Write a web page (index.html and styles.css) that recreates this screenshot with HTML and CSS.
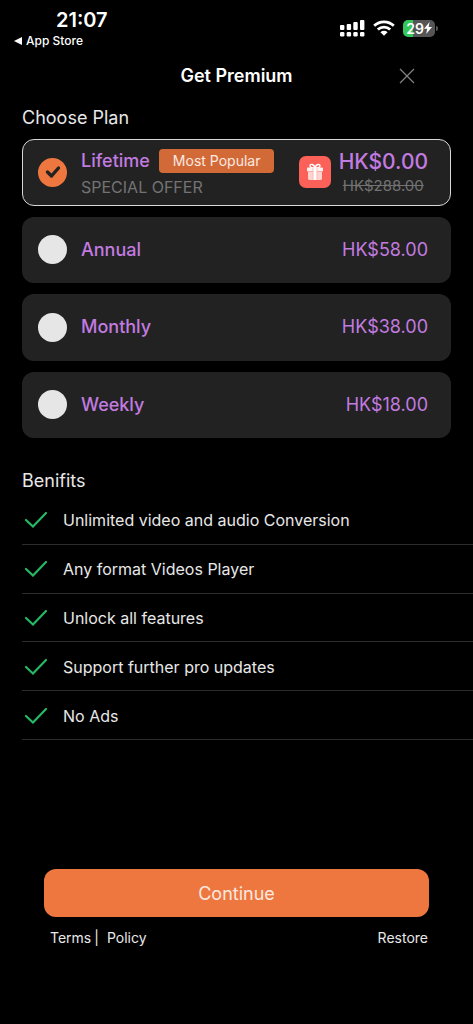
FILE: index.html
```html
<!DOCTYPE html>
<html lang="en">
<head>
<meta charset="utf-8">
<meta name="viewport" content="width=device-width, initial-scale=1">
<title>Get Premium</title>
<link rel="stylesheet" href="styles.css">
</head>
<body>
<div class="screen">
  <div class="status">
    <div class="status-left">
      <div class="clock">21:07</div>
      <a class="back" href="#">
        <svg width="8" height="8" viewBox="0 0 8 8" aria-hidden="true"><path d="M8 0v8L0 4z" fill="#fff"/></svg>
        App Store
      </a>
    </div>
    <div class="status-right">
      <svg width="25" height="17" viewBox="0 0 25 17" fill="#fff" aria-label="Signal">
        <rect x="0" y="5" width="4.400" height="5" rx="1"/><rect x="6.700" y="4" width="4.400" height="6" rx="1"/><rect x="13.300" y="2" width="4.400" height="8" rx="1"/><rect x="20" y="0" width="4.400" height="10" rx="1"/>
        <rect x="0" y="12" width="4.400" height="4.400" rx="1.200"/><rect x="6.700" y="12" width="4.400" height="4.400" rx="1.200"/><rect x="13.300" y="12" width="4.400" height="4.400" rx="1.200"/><rect x="20" y="12" width="4.400" height="4.400" rx="1.200"/>
      </svg>
      <svg width="22" height="16" viewBox="0 0 22 16" aria-label="Wi-Fi">
        <g fill="none" stroke="#fff" stroke-width="2.8"><path d="M1.200 5.800a14 14 0 0 1 19.600 0"/><path d="M4.800 9.600a9 9 0 0 1 12.400 0"/></g>
        <path d="M7.400 12.200a5.200 5.200 0 0 1 7.200 0L11 15.800z" fill="#fff"/>
      </svg>
      <div class="battery">
        <span>29</span>
        <svg width="8" height="12" viewBox="0 0 8 12" aria-hidden="true"><path d="M5.600 0L0 6.800h3.200L2.200 12 8 5H4.600z" fill="#fff"/></svg>
      </div>
    </div>
  </div>

  <header class="title-bar">
    <h1>Get Premium</h1>
    <button class="close" type="button" aria-label="Close">
      <svg width="16" height="16" viewBox="0 0 16 16"><path d="M1 1l14 14M15 1L1 15" stroke="#858585" stroke-width="1.2" fill="none"/></svg>
    </button>
  </header>

  <main>
    <h2 class="plans-title">Choose Plan</h2>
    <form class="plans">
      <label class="plan plan-selected">
        <input class="radio" type="radio" name="plan" checked>
        <svg class="tick" width="16" height="14" viewBox="0 0 16 14" aria-hidden="true"><path d="M2.500 7l4 4 7-8" fill="none" stroke="#222" stroke-width="3.4" stroke-linecap="round" stroke-linejoin="round"/></svg>
        <span class="info">
          <span class="name-row"><span class="name">Lifetime</span><span class="tag">Most Popular</span></span>
          <span class="offer">SPECIAL OFFER</span>
        </span>
        <span class="gift">
          <svg width="18" height="18" viewBox="0 0 18 18" aria-hidden="true">
            <path d="M9 5C7 5 4 4.800 4 2.800S8 .5 9 5c1-4.500 5-4.200 5-2.200S11 5 9 5z" fill="none" stroke="#fff" stroke-width="1.4"/>
            <rect x="1" y="4.500" width="16" height="4" rx="1" fill="#fff3f2"/>
            <path d="M2 9h14v6.500a1.500 1.500 0 0 1-1.500 1.500h-11A1.500 1.500 0 0 1 2 15.500z" fill="#ffd3cf"/>
            <path d="M7.300 4.500h3.400V17H7.300z" fill="#fff"/>
            <path d="M7 4.500V17M11 4.500V17" stroke="#ffaaa4" stroke-width=".6"/>
          </svg>
        </span>
        <span class="prices"><span class="price price-big">HK$0.00</span><s class="old">HK$288.00</s></span>
      </label>
      <label class="plan"><input class="radio" type="radio" name="plan"><span class="info name">Annual</span><span class="price">HK$58.00</span></label>
      <label class="plan"><input class="radio" type="radio" name="plan"><span class="info name">Monthly</span><span class="price">HK$38.00</span></label>
      <label class="plan"><input class="radio" type="radio" name="plan"><span class="info name">Weekly</span><span class="price">HK$18.00</span></label>
    </form>

    <h2 class="benefits-title">Benifits</h2>
    <ul class="benefits">
      <li><svg class="check" width="22" height="16" viewBox="0 0 22 16" aria-hidden="true"><path d="M1 8l7 6.500L21 1"/></svg>Unlimited video and audio Conversion</li>
      <li><svg class="check" width="22" height="16" viewBox="0 0 22 16" aria-hidden="true"><path d="M1 8l7 6.500L21 1"/></svg>Any format Videos Player</li>
      <li><svg class="check" width="22" height="16" viewBox="0 0 22 16" aria-hidden="true"><path d="M1 8l7 6.500L21 1"/></svg>Unlock all features</li>
      <li><svg class="check" width="22" height="16" viewBox="0 0 22 16" aria-hidden="true"><path d="M1 8l7 6.500L21 1"/></svg>Support further pro updates</li>
      <li><svg class="check" width="22" height="16" viewBox="0 0 22 16" aria-hidden="true"><path d="M1 8l7 6.500L21 1"/></svg>No Ads</li>
    </ul>
  </main>

  <footer class="footer">
    <button class="continue" type="button">Continue</button>
    <nav class="links">
      <span class="legal"><a href="#">Terms</a><span class="bar">|</span><a href="#">Policy</a></span>
      <a href="#">Restore</a>
    </nav>
  </footer>
</div>
</body>
</html>
```
FILE: styles.css
```css
* { box-sizing: border-box; }

body {
  margin: 0;
  background: #000;
  color: #e8e8e8;
  font-family: Inter, "Liberation Sans", sans-serif;
}

a { color: inherit; text-decoration: none; }
button { border: 0; padding: 0; font-family: inherit; cursor: pointer; }

.screen {
  min-height: 100vh;
  display: flex;
  flex-direction: column;
}

.status {
  display: flex;
  justify-content: space-between;
  padding: 8px 38px 0 14px;
  color: #fff;
}
.clock {
  padding-left: 42px;
  font-size: 20px;
  line-height: 24px;
  font-weight: 600;
}
.back {
  display: flex;
  align-items: center;
  gap: 4px;
  font-size: 12px;
  line-height: 18px;
  font-weight: 500;
}
.status-right {
  display: flex;
  align-items: center;
  gap: 8px;
  height: 40px;
}
.battery {
  position: relative;
  display: flex;
  align-items: center;
  justify-content: center;
  width: 32px;
  height: 17px;
  border-radius: 5px;
  background: linear-gradient(90deg, #34c759 30%, #555 30%);
  font-size: 14px;
  font-weight: 600;
}
.battery::after {
  content: "";
  position: absolute;
  right: -3px;
  top: 6px;
  width: 2px;
  height: 5px;
  border-radius: 0 2px 2px 0;
  background: #555;
}

.title-bar {
  display: grid;
  grid-template-columns: 1fr auto 1fr;
  align-items: center;
  height: 52px;
}
h1 {
  grid-column: 2;
  margin: 0;
  color: #fff;
  font-size: 18px;
  line-height: 24px;
  font-weight: 600;
}
.close {
  justify-self: end;
  display: flex;
  margin-right: 58px;
  background: none;
}

h2 {
  margin: 0 22px;
  font-size: 18px;
  line-height: 24px;
  font-weight: 400;
}
.plans-title { margin-top: 4px; margin-bottom: 9px; }

.plans {
  display: grid;
  grid-auto-rows: 1fr;
  gap: 11px;
  min-height: 299px;
  margin: 0 22px;
}
.plan {
  position: relative;
  display: flex;
  align-items: center;
  padding: 0 23px 0 16px;
  border-radius: 12px;
  background: #222;
}
.plan-selected {
  padding: 0 22px 0 15px;
  border: 1px solid #d8d8d8;
}
.radio {
  appearance: none;
  flex: none;
  width: 29px;
  height: 29px;
  margin: 0 14px 0 0;
  border-radius: 50%;
  background: #e6e6e6;
}
.radio:checked { background: #ee773f; }
.tick {
  position: absolute;
  left: 22px;
  top: 50%;
  transform: translateY(-50%);
}
.info { flex: 1; }
.plan-selected .info,
.prices { padding-top: 4px; }
.name {
  color: #c27be0;
  font-size: 18px;
  line-height: 24px;
  font-weight: 500;
}
.name-row { display: flex; align-items: center; gap: 9px; }
.tag {
  padding: 0 14px;
  border-radius: 4px;
  background: #d26a38;
  color: #fbe9e0;
  font-size: 14px;
  line-height: 24px;
}
.offer {
  display: block;
  margin-top: 2px;
  color: #737373;
  font-size: 16px;
  line-height: 24px;
}
.gift {
  display: grid;
  place-items: center;
  width: 32px;
  height: 32px;
  margin-right: 8px;
  border-radius: 7px;
  background: #fb6059;
}
.price {
  color: #c27be0;
  font-size: 18px;
  line-height: 24px;
}
.prices {
  display: flex;
  flex-direction: column;
  align-items: center;
}
.price-big { font-size: 21px; font-weight: 500; }
.old {
  color: #737373;
  font-size: 15px;
  line-height: 24px;
}

.benefits-title { margin-top: 31px; margin-bottom: 3px; }
.benefits {
  display: grid;
  grid-auto-rows: 1fr;
  min-height: 244px;
  margin: 0 0 0 22px;
  padding: 0;
  list-style: none;
}
.benefits li {
  display: flex;
  align-items: center;
  gap: 16px;
  padding: 1px 0 0 3px;
  border-bottom: 1px solid #2b2b2b;
  font-size: 16px;
  line-height: 20px;
}
.check {
  fill: none;
  stroke: #25b865;
  stroke-width: 2.2;
  stroke-linecap: round;
}

.footer {
  margin-top: auto;
  padding: 24px 44px 76px;
}
.continue {
  display: block;
  width: 100%;
  height: 48px;
  border-radius: 12px;
  background: #ee773f;
  color: #fbe9e0;
  font-size: 18px;
}
.links {
  display: flex;
  justify-content: space-between;
  margin-top: 11px;
  padding: 0 1px 0 6px;
  font-size: 14px;
  line-height: 20px;
}
.bar { margin: 0 8px 0 3px; }
```
